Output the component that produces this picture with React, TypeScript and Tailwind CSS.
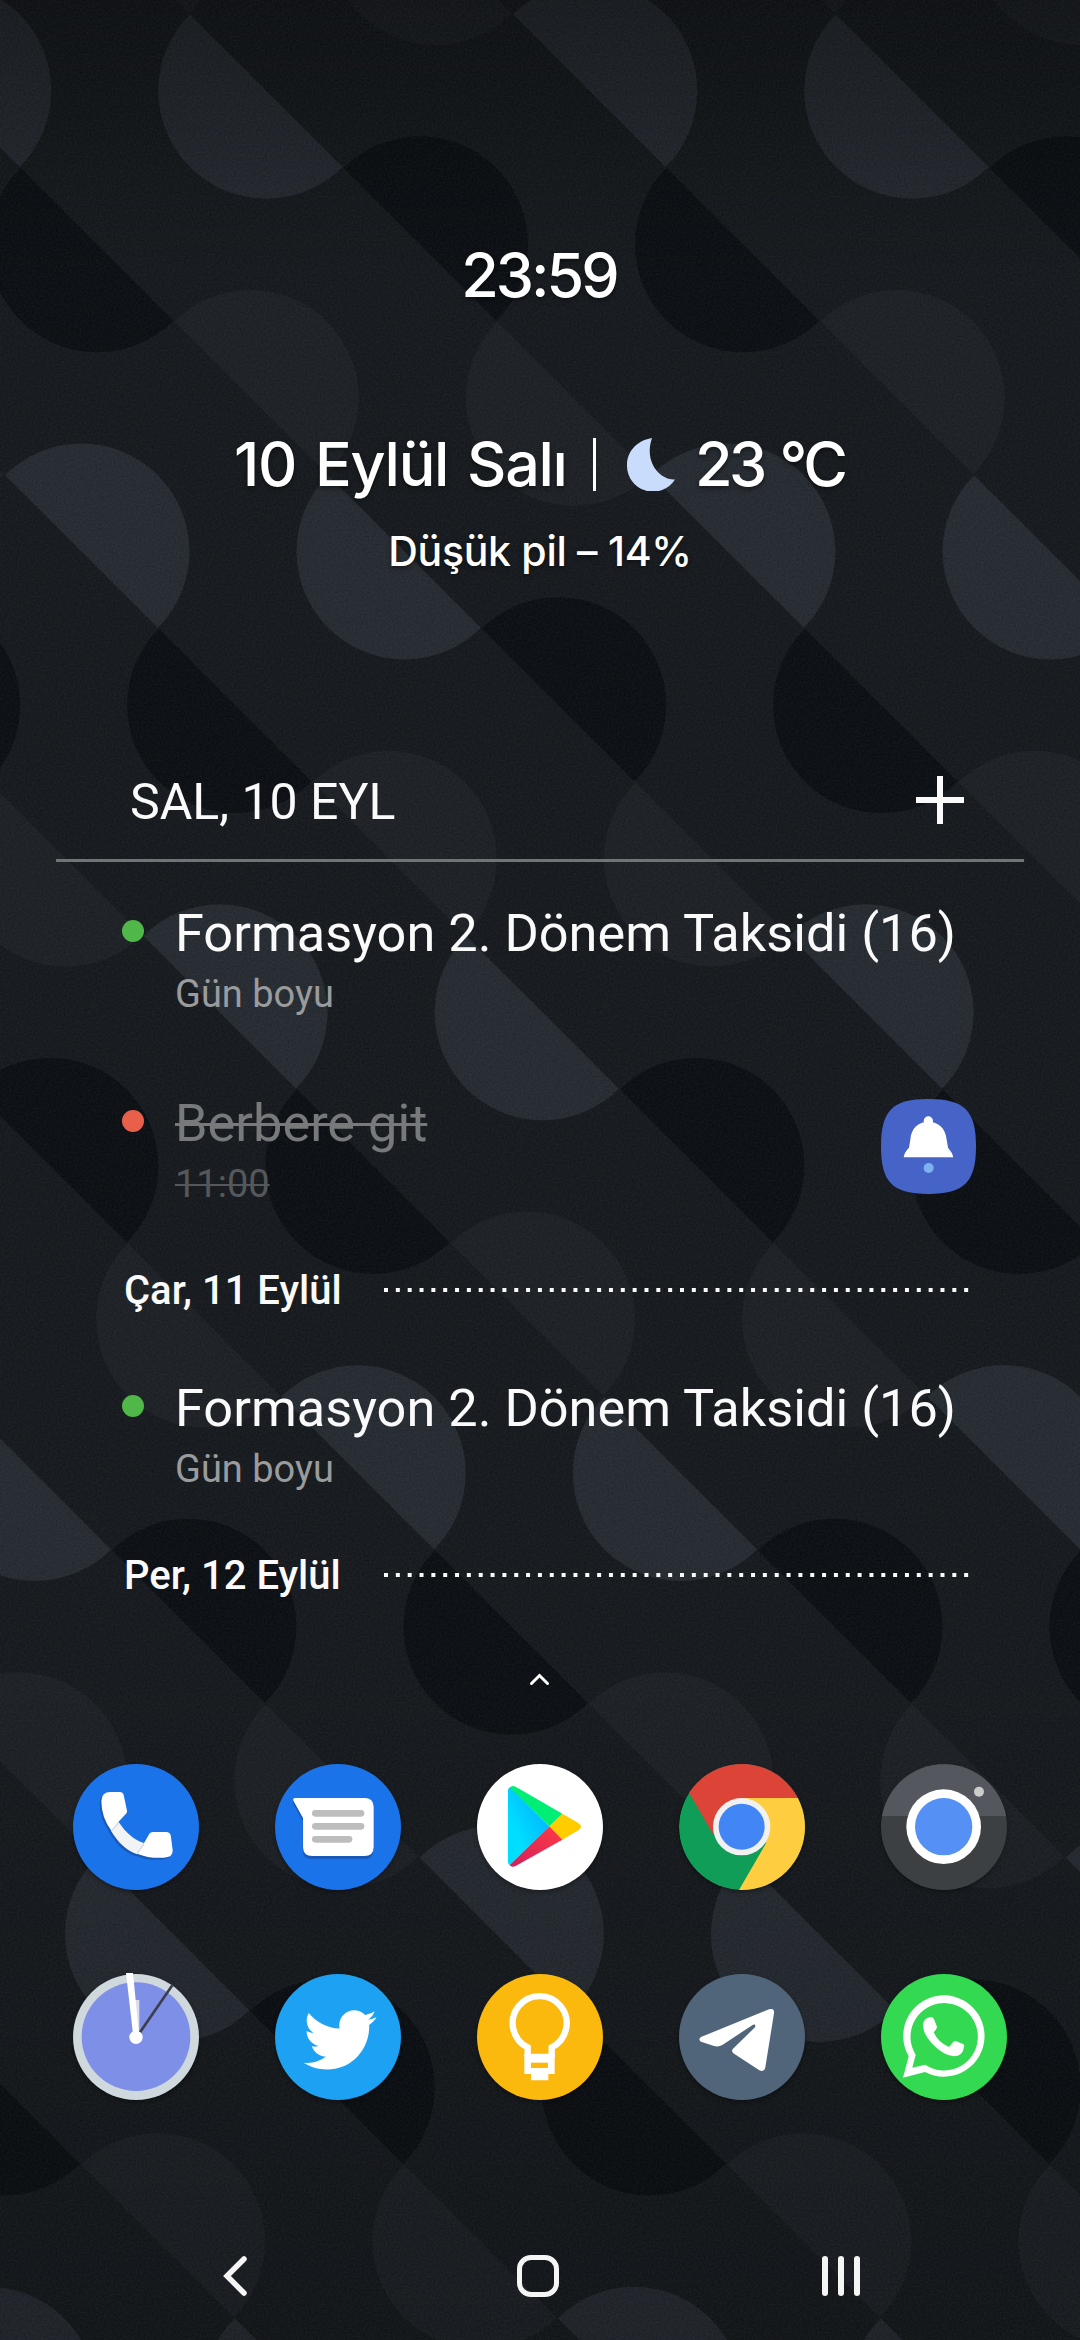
import type { ReactNode } from "react";
import { FaTwitter } from "react-icons/fa";

type CalendarEvent = {
  title: string;
  time: string;
  dot: string;
  done?: boolean;
};

const TODAY: CalendarEvent[] = [
  {
    title: "Formasyon 2. Dönem Taksidi (16)",
    time: "Gün boyu",
    dot: "bg-[#4fb848]",
  },
  { title: "Berbere git", time: "11:00", dot: "bg-[#e9604a]", done: true },
];

const TOMORROW: CalendarEvent = {
  title: "Formasyon 2. Dönem Taksidi (16)",
  time: "Gün boyu",
  dot: "bg-[#4fb848]",
};

const RADIUS = 108;
const HALF = RADIUS * Math.SQRT1_2;
const STEP = 153.6;
const PERIOD = 646;
const SHADES = ["#1d2126", "#262b32", "#0b0f13"];

// Rows of half discs that alternate sides along 45 degree diagonals.
const Wallpaper = () => {
  const shapes: ReactNode[] = [];
  for (let row = 0; row <= 16; row++) {
    const y = 90.7 + STEP * (row - 1);
    for (let k = 0; k < 6; k++) {
      const lower = k % 2 === 0;
      const shift = (row % 2 === 0 ? 1 : 0) * (PERIOD / 2);
      const raw = 266.3 + (STEP + 0.12) * (row - 1) + shift + (k * PERIOD) / 2;
      const span = PERIOD * 3;
      const base = ((((raw + PERIOD) % span) + span) % span) - PERIOD;
      shapes.push(
        <path
          key={`${row}-${k}`}
          fill={SHADES[row % 3]}
          d={`M${base - HALF} ${y - HALF}A${RADIUS} ${RADIUS} 0 0 ${
            lower ? 0 : 1
          } ${base + HALF} ${y + HALF}Z`}
        />,
      );
    }
  }

  return (
    <svg
      className="absolute inset-0"
      width="1080"
      height="2340"
      viewBox="0 0 1080 2340"
    >
      <defs>
        <linearGradient id="fade" x1="0" y1="0" x2="0" y2="1">
          <stop offset="0" stopColor="#000" stopOpacity="0.38" />
          <stop offset="0.12" stopColor="#000" stopOpacity="0" />
          <stop offset="0.7" stopColor="#000" stopOpacity="0" />
          <stop offset="1" stopColor="#000" stopOpacity="0.2" />
        </linearGradient>
        <filter
          id="grain"
          x="0"
          y="0"
          width="100%"
          height="100%"
          colorInterpolationFilters="sRGB"
        >
          <feTurbulence type="fractalNoise" baseFrequency="0.5" numOctaves="2" />
          <feColorMatrix values="2 0 0 0 -0.5  2 0 0 0 -0.5  2 0 0 0 -0.5  0 0 0 0 1" />
        </filter>
      </defs>
      <rect width="1080" height="2340" fill="#161a1e" />
      {shapes}
      <rect width="1080" height="2340" fill="url(#fade)" />
      <rect width="1080" height="2340" filter="url(#grain)" opacity="0.03" />
    </svg>
  );
};

const EventRow = ({ event, badge }: { event: CalendarEvent; badge?: ReactNode }) => (
  <div className="flex h-[190px] pl-[122px]">
    <span className={`mt-[58px] size-[22px] shrink-0 rounded-full ${event.dot}`} />
    <div className="ml-[31px] flex-1 pt-[41px] whitespace-nowrap">
      <p
        className={`h-[60px] text-[52.3px] leading-[60px] ${
          event.done ? "text-[#77797b]" : "text-[#fafafa]"
        }`}
      >
        <span className={event.done ? "line-through decoration-[3px]" : ""}>
          {event.title}
        </span>
      </p>
      <p
        className={`mt-[7px] h-12 text-[38px] leading-[48px] ${
          event.done ? "text-[#55585b]" : "text-[#999b9d]"
        }`}
      >
        <span className={event.done ? "line-through decoration-[2px]" : ""}>
          {event.time}
        </span>
      </p>
    </div>
    {badge}
  </div>
);

const DateRow = ({ label }: { label: string }) => (
  <div className="flex h-[95px] items-center pl-[124px]">
    <span className="w-[260px] pt-[3px] text-[40px] font-medium whitespace-nowrap text-[#fafafa]">
      {label}
    </span>
    <svg width="586" height="4" viewBox="0 0 586 4">
      <line
        x1="0"
        y1="2"
        x2="585"
        y2="2"
        stroke="#fafafa"
        strokeWidth="4"
        strokeDasharray="4 7.84"
      />
    </svg>
  </div>
);

const BellBadge = () => (
  <svg
    className="mt-[47px] mr-[104px] shrink-0"
    width="95"
    height="95"
    viewBox="0 0 285 285"
  >
    <path
      fill="#4664c8"
      d="M142 0C250 0 285 35 285 142S250 285 142 285 0 250 0 142 35 0 142 0Z"
    />
    <circle cx="142" cy="66" r="14" fill="#fff" />
    <path
      fill="#fff"
      d="M68 175Q70 160 84 146L88 122C90 88 112 68 142 68S194 88 197 122L201 146Q214 160 217 175Z"
    />
    <circle cx="143" cy="207" r="15" fill="#7db1f0" />
  </svg>
);

const Disc = ({ color }: { color: string }) => (
  <circle cx="189" cy="189" r="189" fill={color} />
);

const IconFrame = ({ children }: { children: ReactNode }) => (
  <svg
    className="overflow-visible drop-shadow-[0_2px_2px_rgba(0,0,0,0.35)]"
    width="126"
    height="126"
    viewBox="0 0 378 378"
  >
    {children}
  </svg>
);

const PHONE_TOP =
  "M112 84H140Q150 84 152 93L162 140Q163 145 159 149L136 174L116 202Q85 160 85 112Q86 84 112 84Z";
const PHONE_GRIP = "M137 174C160 208 183 228 213 237L192 271C158 257 135 236 114 200Z";
const PHONE_END =
  "M213 237L229 209Q233 204 239 204H282Q291 205 293 213L299 258Q301 280 272 281Q230 284 192 269Z";

const PhoneIcon = () => (
  <IconFrame>
    <Disc color="#1a73e8" />
    <g fill="#185abc" transform="translate(-5 6)">
      <path d={PHONE_TOP} />
      <path d={PHONE_GRIP} />
      <path d={PHONE_END} />
    </g>
    <path fill="#f1f3f4" d={PHONE_GRIP} />
    <path fill="#fff" d={PHONE_TOP} />
    <path fill="#fff" d={PHONE_END} />
    <path stroke="#d9dbdd" strokeWidth="4" d="M137 176L115 201M213 240L193 268" />
  </IconFrame>
);

const BUBBLE =
  "M62 102H268Q296 102 296 130V248Q296 276 268 276H112Q84 276 84 248V162L56 112Q51 102 62 102Z";

const MessagesIcon = () => (
  <IconFrame>
    <Disc color="#1a73e8" />
    <path fill="#185abc" d={BUBBLE} transform="translate(-1 9)" />
    <path fill="#fff" d={BUBBLE} />
    <g fill="#bdbdbd">
      <rect x="111" y="138" width="157" height="20" rx="10" />
      <rect x="111" y="177" width="157" height="20" rx="10" />
      <rect x="111" y="216" width="121" height="20" rx="10" />
    </g>
  </IconFrame>
);

const PlayIcon = () => (
  <IconFrame>
    <defs>
      <linearGradient id="playBlue" x1="1" y1="0" x2="0" y2="1">
        <stop offset="0" stopColor="#00a8ff" />
        <stop offset="0.7" stopColor="#00deff" />
      </linearGradient>
      <linearGradient id="playRed" x1="1" y1="0" x2="0" y2="1">
        <stop offset="0" stopColor="#ff3a44" />
        <stop offset="1" stopColor="#d4205c" />
      </linearGradient>
    </defs>
    <Disc color="#fff" />
    <path fill="url(#playBlue)" d="M99 70L217 187L99 304Q93 301 93 294V79Q93 73 99 70Z" />
    <path fill="#00ee76" d="M98 71Q104 63 116 68L256 149L217 187Z" />
    <path fill="#ffcc00" d="M256 149L304 177Q320 188 304 199L256 227L217 187Z" />
    <path fill="url(#playRed)" d="M217 187L256 227L116 306Q104 311 98 304Z" />
  </IconFrame>
);

const ChromeIcon = () => (
  <IconFrame>
    <clipPath id="chromeClip">
      <circle cx="189" cy="189" r="189" />
    </clipPath>
    <g clipPath="url(#chromeClip)">
      <Disc color="#0f9d58" />
      <path fill="#ffcd40" d="M188 102H378V378H180L262 236L188 188Z" />
      <path fill="#db4437" d="M188 188V102H378V0H0V34L31 88L103 212Z" />
    </g>
    <circle cx="188" cy="188" r="86" fill="#f1f1f1" />
    <circle cx="188" cy="188" r="69" fill="#4285f4" />
  </IconFrame>
);

const CameraIcon = () => (
  <IconFrame>
    <Disc color="#3c4043" />
    <path fill="#54585e" d="M3 156A189 189 0 0 1 375 156Z" />
    <circle cx="188" cy="188" r="112" fill="#fff" />
    <circle cx="188" cy="188" r="86" fill="#5591f5" />
    <circle cx="294" cy="83" r="15" fill="#ccc" />
  </IconFrame>
);

const ClockIcon = () => (
  <IconFrame>
    <Disc color="#cfd8dc" />
    <circle cx="189" cy="188" r="163" fill="#7e8fe8" />
    <rect x="183" y="78" width="16" height="112" fill="#dcdcea" />
    <path stroke="#3c3f4c" strokeWidth="8" d="M298 34L200 176" />
    <path fill="#fff" d="M159 -3H180L198 180H180Z" />
    <circle cx="189" cy="190" r="20" fill="#fff" />
  </IconFrame>
);

const TwitterIcon = () => (
  <IconFrame>
    <Disc color="#1da1f2" />
    <FaTwitter x="86" y="88" size={219} color="#fff" />
  </IconFrame>
);

const KeepIcon = () => (
  <IconFrame>
    <Disc color="#fbb80d" />
    <path
      fill="none"
      stroke="#fff"
      strokeWidth="19"
      d="M152 250V220A81 81 0 1 1 224 220V250"
    />
    <path fill="#fff" d="M142 239H233V300H214V319H162V300H142Z" />
    <rect x="162" y="266" width="51" height="16" fill="#fbb80d" />
  </IconFrame>
);

const TelegramIcon = () => (
  <IconFrame>
    <Disc color="#50657a" />
    <path
      fill="#fff"
      d="M66 189L270 106Q287 101 285 118L259 280Q256 295 241 289L163 238Q156 231 162 224L228 160Q232 149 222 152L130 213Q118 220 105 216L66 203Q56 196 66 189Z"
    />
  </IconFrame>
);

const WhatsAppIcon = () => (
  <IconFrame>
    <Disc color="#32d951" />
    <path
      fill="#fff"
      fillRule="evenodd"
      d="M66 311L83 247A122 122 0 1 1 132 294ZM94 281L133 272A101 101 0 1 0 104 242Z"
    />
    <path
      fill="#fff"
      d="M126 154Q128 130 150 129Q156 129 159 136L168 158Q168 164 158 175Q172 206 204 219L217 203Q220 200 224 201L246 210Q251 212 249 218Q246 246 218 247Q186 244 152 208Q126 178 126 154Z"
    />
  </IconFrame>
);

const NavBar = () => (
  <nav className="mt-[155px] flex h-[42px] items-center pl-[223px]">
    <svg width="25" height="42" viewBox="0 0 25 42" fill="none">
      <path
        d="M21 4L4 21L21 38"
        stroke="#f5f5f5"
        strokeWidth="5.5"
        strokeLinecap="round"
      />
    </svg>
    <span className="ml-[269px] h-[42px] w-[42px] rounded-[14px] border-[5.5px] border-[#f5f5f5]" />
    <div className="ml-[263px] flex gap-[10px]">
      <span className="h-10 w-[6px] rounded-full bg-[#f5f5f5]" />
      <span className="h-10 w-[6px] rounded-full bg-[#f5f5f5]" />
      <span className="h-10 w-[6px] rounded-full bg-[#f5f5f5]" />
    </div>
  </nav>
);

export default function App() {
  return (
    <div className="relative h-[2340px] w-[1080px] overflow-hidden bg-[#161a1e] font-['Roboto',sans-serif]">
      <Wallpaper />
      <main className="relative flex h-full flex-col">
        <section className="pt-[235px] font-['Inter',sans-serif] font-medium whitespace-nowrap text-white [text-shadow:0_2px_5px_rgba(0,0,0,0.5)]">
          <p className="h-20 pr-[2px] text-center text-[61px] leading-[80px] tracking-[-3px]">
            23:59
          </p>
          <div className="mt-[109px] flex h-20 items-center pl-[234px]">
            <span className="w-[359px] text-[61px] leading-[80px] tracking-[-1.3px] [word-spacing:4px]">
              10 Eylül Salı
            </span>
            <span className="h-[53px] w-[3px] bg-white" />
            <svg className="ml-[31px]" width="48" height="53" viewBox="0 0 48 53">
              <path
                fill="#cadcfc"
                d="M25 0C8 3 0 15 0 27A26 26 0 0 0 48 41.5C36 43 16 27 25 0Z"
              />
            </svg>
            <span className="ml-5 text-[61px] leading-[80px] tracking-[-3.5px] [word-spacing:3px]">
              23 °C
            </span>
          </div>
          <p className="mt-[17px] h-[60px] text-center text-[41px] leading-[60px] tracking-[-0.3px]">
            Düşük pil – 14%
          </p>
        </section>

        <section className="mt-[181px]">
          <header className="flex h-20 items-center justify-between pr-[116px] pl-[130px] text-[#fafafa]">
            <h1 className="text-[50px] leading-[80px]">SAL, 10 EYL</h1>
            <svg className="-mt-1" width="48" height="48" viewBox="0 0 48 48">
              <path d="M24 0V48M0 24H48" stroke="currentColor" strokeWidth="6" />
            </svg>
          </header>
          <div className="mx-14 mt-[17px] h-[3px] bg-[#717375]" />
          <EventRow event={TODAY[0]} />
          <EventRow event={TODAY[1]} badge={<BellBadge />} />
          <DateRow label="Çar, 11 Eylül" />
          <EventRow event={TOMORROW} />
          <DateRow label="Per, 12 Eylül" />
        </section>

        <svg
          className="mt-[50px] ml-[529px]"
          width="21"
          height="14"
          viewBox="0 0 21 14"
          fill="none"
        >
          <path
            d="M2.5 11.5L10.5 3.5L18.5 11.5"
            stroke="#fff"
            strokeWidth="3"
            strokeLinecap="round"
          />
        </svg>

        <section className="mt-[78px] grid grid-cols-[repeat(5,126px)] gap-x-[76px] gap-y-[84px] pl-[73px]">
          <PhoneIcon />
          <MessagesIcon />
          <PlayIcon />
          <ChromeIcon />
          <CameraIcon />
          <ClockIcon />
          <TwitterIcon />
          <KeepIcon />
          <TelegramIcon />
          <WhatsAppIcon />
        </section>

        <NavBar />
      </main>
    </div>
  );
}
